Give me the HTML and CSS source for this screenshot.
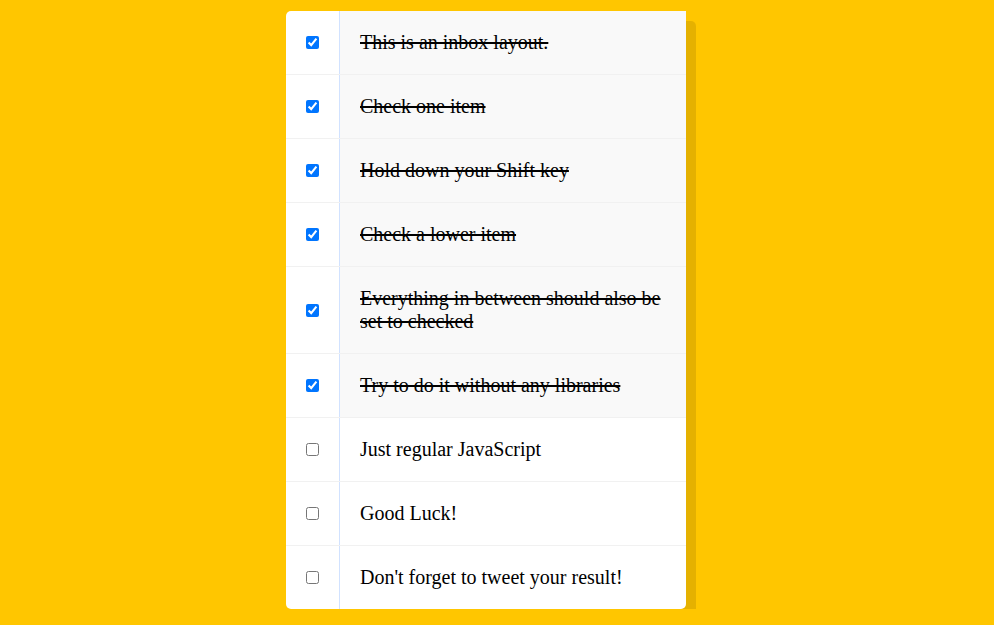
FILE: index.html
```html
<!DOCTYPE html>
<html lang="en">
<head>
<meta charset="UTF-8">
<title>Hold Shift to Check Multiple Checkboxes</title>
<link rel="stylesheet" href="styles.css">
</head>
<body>
<div class="page">
  <div class="inbox">
    <div class="item"><input type="checkbox" checked><p>This is an inbox layout.</p></div>
    <div class="item"><input type="checkbox" checked><p>Check one item</p></div>
    <div class="item"><input type="checkbox" checked><p>Hold down your Shift key</p></div>
    <div class="item"><input type="checkbox" checked><p>Check a lower item</p></div>
    <div class="item"><input type="checkbox" checked><p>Everything in between should also be set to checked</p></div>
    <div class="item"><input type="checkbox" checked><p>Try to do it without any libraries</p></div>
    <div class="item"><input type="checkbox"><p>Just regular JavaScript</p></div>
    <div class="item"><input type="checkbox"><p>Good Luck!</p></div>
    <div class="item"><input type="checkbox"><p>Don't forget to tweet your result!</p></div>
  </div>
</div>
</body>
</html>
```
FILE: styles.css
```css
html {
  background: #ffc600;
}

body {
  margin: 0;
  font-family: "Liberation Serif", "Times New Roman", serif;
}

.page {
  display: flex;
  justify-content: center;
  padding: 11px 22px 0 0;
}

.inbox {
  width: 400px;
  background: #ffffff;
  border-radius: 5px;
  box-shadow: 10px 10px 0 rgba(0, 0, 0, 0.1);
}

.item {
  display: flex;
  align-items: center;
  border-bottom: 1px solid #f1f1f1;
}

.item:last-child {
  border-bottom: 0;
}

.item input[type="checkbox"] {
  margin: 20px;
  width: 13px;
  height: 13px;
}

.item p {
  margin: 0;
  padding: 20px;
  flex: 1;
  font-size: 20px;
  line-height: 23px;
  color: #000;
  border-left: 1px solid #d1e2ff;
}

.item input:checked + p {
  background: #f9f9f9;
  text-decoration: line-through;
}
```
